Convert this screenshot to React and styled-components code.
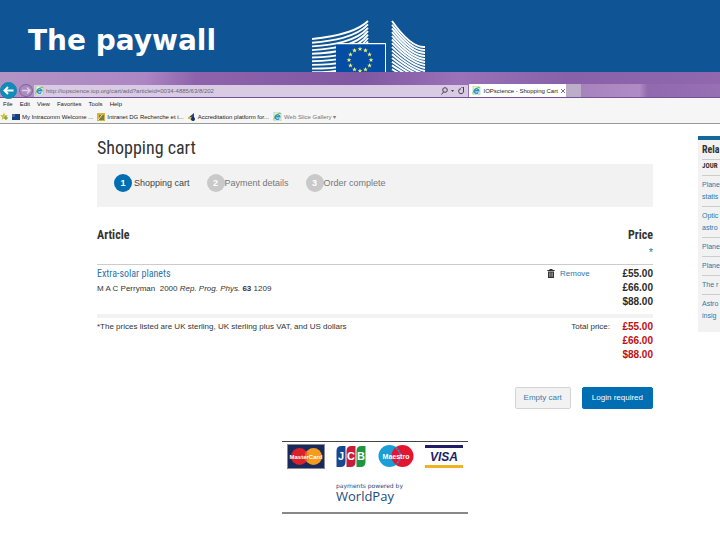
import React from 'react';
import styled, { createGlobalStyle } from 'styled-components';

const GlobalStyle = createGlobalStyle`
  * { box-sizing: border-box; }
  body {
    margin: 0;
    background: #fff;
    color: #333;
    font: 9px/14px "Liberation Sans", Arial, sans-serif;
    overflow-x: hidden;
  }
  h1, h2, h3, p, ul, ol { margin: 0; padding: 0; }
  ul, ol { list-style: none; }
  a { color: #2a78ac; text-decoration: none; }
  button, input { font: inherit; }
  svg { display: block; flex: none; }
`;

const narrow = '"Roboto Condensed", "Open Sans Condensed", Roboto, sans-serif';

const Banner = styled.header`
  display: grid;
  grid-template-columns: 1fr 114px 1fr;
  height: 72px;
  padding-left: 18px;
  background: #0f5494;
`;

const BannerTitle = styled.h1`
  padding: 25px 0 0 10px;
  color: #fff;
  font: bold 28px/32px "DejaVu Sans", Verdana, sans-serif;
  white-space: nowrap;
`;

const Chrome = styled.div`
  padding-top: 12px;
  background: linear-gradient(100deg, #b294c4 0%, #ad86c3 20%, #8f63ac 27%, #8057a2 50%, #9b72b7 63%, #8861a9 78%, #9168ae 100%);
  font: 6px/12px "Liberation Sans", Arial, sans-serif;
`;

const AddressRow = styled.div`
  display: flex;
  align-items: center;
  height: 14px;
  border-bottom: 1px solid #765095;
`;

const NavButton = styled.button`
  display: flex;
  align-items: center;
  justify-content: center;
  width: ${p => (p.$back ? 17 : 14)}px;
  height: ${p => (p.$back ? 17 : 13)}px;
  margin-right: ${p => (p.$back ? 2 : 1)}px;
  padding: 0;
  flex: none;
  border: 1px solid ${p => (p.$back ? '#1a82ad' : '#81659b')};
  border-radius: 50%;
  background: ${p => (p.$back ? '#108cba' : '#aa8bc0')};
  color: ${p => (p.$back ? '#fff' : '#ddd0e8')};
`;

const AddressBar = styled.div`
  display: flex;
  align-items: center;
  flex: 433;
  min-width: 0;
  height: 12px;
  padding: 0 3px 0 1px;
  gap: 2px;
  background: #d9cbe4;
  color: #4a4056;
`;

const AddressInput = styled.input`
  flex: 1;
  min-width: 0;
  height: 12px;
  padding: 0;
  border: 0;
  outline: 0;
  background: none;
  color: #6d6576;
`;

const BarButton = styled.button`
  display: flex;
  padding: 0;
  border: 0;
  background: none;
  color: #463c52;
`;

const Tabs = styled.div`
  display: flex;
  flex: 252;
  min-width: 0;
  height: 13px;
  margin-left: 1px;
`;

const Tab = styled.div`
  display: flex;
  align-items: center;
  flex: none;
  gap: 2px;
  width: 97px;
  padding: 0 3px;
  background: #fff;
  color: #222;
  white-space: nowrap;
`;

const TabLabel = styled.span`
  flex: 1;
`;

const NewTab = styled.button`
  width: 15px;
  padding: 0;
  border: 0;
  background: #bcadc8;
`;

const FadedTabs = styled.div`
  flex: 1;
  background: linear-gradient(90deg, #a783bd 0%, #b08cc5 42%, #9169ae 48%, #9770b4 100%);
`;

const MenuBar = styled.nav`
  display: flex;
  gap: 7px;
  height: 12px;
  padding-left: 3px;
  background: #f6f6f6;
`;

const MenuButton = styled.button`
  padding: 0;
  border: 0;
  background: none;
  color: #222;
`;

const Favorites = styled.nav`
  display: flex;
  align-items: center;
  gap: 4px;
  height: 14px;
  border-bottom: 1px solid #999;
  background: #f6f6f6;
`;

const Favorite = styled.a`
  display: flex;
  align-items: center;
  gap: 2px;
  color: ${p => (p.$muted ? '#777' : '#222')};
  white-space: nowrap;
`;

const Page = styled.div`
  display: grid;
  grid-template-columns: minmax(0, 1fr) 22px;
  gap: 45px;
  align-items: start;
  padding: 12px 0 24px 97px;
`;

const PageTitle = styled.h2`
  font: 18px/24px ${narrow};
`;

const Steps = styled.ol`
  display: flex;
  gap: 17px;
  height: 43px;
  margin-top: 4px;
  padding: 10px 17px;
  background: #f2f2f2;
`;

const Step = styled.li`
  display: flex;
  align-items: center;
  gap: ${p => (p.$current ? 2 : 0)}px;
  height: 18px;
  color: ${p => (p.$current ? '#444' : '#777')};
`;

const StepNumber = styled.span`
  width: 18px;
  border-radius: 50%;
  background: ${p => (p.$current ? '#006eb2' : '#c9c9c9')};
  color: #fff;
  font-weight: bold;
  line-height: 18px;
  text-align: center;
`;

const CartTable = styled.table`
  width: 100%;
  margin-top: 20px;
  border-collapse: collapse;

  th, td {
    padding: 0;
    text-align: left;
    vertical-align: top;
  }
`;

const HeadCell = styled.th`
  height: 37px;
  border-bottom: 1px solid #ccc;
  font: bold 12px/16px ${narrow};

  && { text-align: ${p => (p.$right ? 'right' : 'left')}; }
`;

const Star = styled.a`
  display: block;
  font: 11px/18px "Liberation Sans", sans-serif;
`;

const Cell = styled.td`
  && { padding-top: 2px; }
`;

const SideCell = styled(Cell)`
  width: 64px;
`;

const TotalLabel = styled.th`
  font-size: 8px;
  font-weight: normal;

  && {
    padding: 2px 1px 0 0;
    text-align: right;
  }
`;

const ItemLink = styled.a`
  display: block;
  font: 10px/14px ${narrow};
`;

const Small = styled.p`
  font-size: 8px;
  line-height: ${p => (p.$citation ? 16 : 14)}px;
`;

const RemoveButton = styled.button`
  display: flex;
  align-items: center;
  gap: 5px;
  padding: 0;
  border: 0;
  background: none;
  color: #2a78ac;
  font-size: 8px;
`;

const Prices = styled.td`
  width: 42px;
  color: ${p => (p.$total ? '#c00d12' : '#2b2b2b')};
  font: bold 10px/14px "Liberation Sans", sans-serif;

  && {
    padding: 2px 0 5px;
    text-align: right;
  }
`;

const TotalRow = styled.tr`
  border-top: 4px solid #f2f2f2;
`;

const Actions = styled.div`
  display: flex;
  justify-content: flex-end;
  gap: 11px;
  margin-top: 20px;
`;

const ActionButton = styled.button`
  height: 22px;
  padding: 0 ${p => (p.$primary ? 9 : 8)}px;
  border: 1px solid ${p => (p.$primary ? '#006eb2' : '#d4d4d4')};
  border-radius: 2px;
  background: ${p => (p.$primary ? '#006eb2' : '#f2f2f2')};
  color: ${p => (p.$primary ? '#fff' : '#3c7cad')};
  font-size: 8px;
`;

const Payments = styled.section`
  width: 186px;
  margin: 32px auto 0;
  border-top: 1px solid #444;
  border-bottom: 2px solid #888;
  color: #234a7c;
`;

const Cards = styled.div`
  display: flex;
  justify-content: space-between;
  padding: 2px 5px 0;
`;

const PoweredBy = styled.p`
  padding: 13px 0 0 54px;
  font: 6px/8px "DejaVu Sans", sans-serif;
  white-space: nowrap;
`;

const WorldPay = styled.p`
  padding: 0 0 9px 54px;
  font: 13px/13px "Open Sans", sans-serif;
`;

const Related = styled.aside`
  min-width: 0;
  padding: 3px 0 7px 4px;
  border-top: 4px solid #14689a;
  background: #f2f2f2;
  font: 7px/12px "Liberation Sans", Arial, sans-serif;
  white-space: nowrap;
`;

const RelatedTitle = styled.h3`
  padding-bottom: 3px;
  font: bold 10px/13px ${narrow};
`;

const RelatedSub = styled.p`
  padding: 1px 0 3px;
  border-top: 1px solid #ccc;
  font: bold 7px/11px ${narrow};
`;

const RelatedItem = styled.li`
  padding: 3px 0;
  border-top: 1px solid #ccc;
`;

function Star5({ x, y, r = 2.5 }) {
  const points = Array.from({ length: 10 }, (_, i) => {
    const a = -Math.PI / 2 + (i * Math.PI) / 5;
    const d = i % 2 ? r * 0.42 : r;
    return `${x + d * Math.cos(a)},${y + d * Math.sin(a)}`;
  }).join(' ');
  return <polygon points={points} fill="#f5f06c" />;
}

const leftLines = Array.from({ length: 10 }, (_, i) => {
  const y = 39 + i * 3.7;
  const lift = Math.max(0, 6 - i * 0.8);
  return `M0 ${y} C20 ${y - lift / 3} 44 ${y - lift} 56 ${21 + i * 3.4}`;
});

const rightLines = Array.from({ length: 14 }, (_, i) => {
  const y = 21 + i * 3.7;
  return `M80 ${y} Q99 ${y + 27 - i * 1.2} 113 ${47 + i * 3}`;
});

function CommissionLogo() {
  return (
    <svg width="114" height="72" viewBox="0 0 114 72" role="img" aria-label="European Commission">
      <g fill="none" stroke="#fff" strokeWidth="1.9">
        {leftLines.map(d => <path key={d} d={d} />)}
        {rightLines.map(d => <path key={d} d={d} />)}
      </g>
      <path d="M24 72V43h50v29z" fill="#fff" />
      <path d="M24 72V44.200h49V72z" fill="#034ea2" />
      {Array.from({ length: 12 }, (_, i) => {
        const a = (i * Math.PI) / 6;
        return <Star5 key={i} x={48 + 11 * Math.sin(a)} y={60 - 11 * Math.cos(a)} />;
      })}
    </svg>
  );
}

function Arrow({ back }) {
  return (
    <svg width="11" height="9" viewBox="0 0 11 9" fill="none" stroke="currentColor" strokeWidth={back ? 2 : 1.3}>
      <path d={back ? 'M10.500 4.500H1.500M5 1L1.500 4.500 5 8' : 'M1 4.500h8M6 1.500l3 3-3 3'} />
    </svg>
  );
}

function IeIcon() {
  return (
    <svg width="9" height="9" viewBox="0 0 9 9">
      <path d="M1 0h5l2 2v7H1z" fill="#e9f4e7" stroke="#8ab88b" strokeWidth=".5" />
      <path d="M2.200 4.800h4.600a2.300 2.300 0 1 0-.5 1.700" fill="none" stroke="#2490c7" strokeWidth="1.400" />
      <path d="M.8 7.500C2 3 5 1 8.300 1.300" fill="none" stroke="#6cb33e" strokeWidth=".8" />
    </svg>
  );
}

function TrashIcon() {
  return (
    <svg width="8" height="9" viewBox="0 0 8 9">
      <path d="M1 2.500h6V9H1zM.3 1h7.400v1H.3zM2.500 0h3v1h-3z" fill="#333" />
      <path d="M2.600 3.500v4.300M4 3.500v4.300M5.400 3.500v4.300" stroke="#ccc" strokeWidth=".6" />
    </svg>
  );
}

const cardText = { fontFamily: 'Liberation Sans, sans-serif', fontWeight: 'bold', textAnchor: 'middle' };

function MasterCard() {
  return (
    <svg width="38" height="25" viewBox="0 0 38 25">
      <path d="M0 0h38v25H0z" fill="#8b8b91" />
      <path d="M1 1h36v23H1z" fill="#182a5b" />
      <circle cx="12.500" cy="12.500" r="8.500" fill="#d9202b" />
      <circle cx="26.500" cy="12.500" r="8.500" fill="#f49b20" />
      <path d="M19.500 7v11M17.500 9h4M17.500 11h4M17.500 14h4M17.500 16h4" stroke="#e7632a" strokeWidth=".8" />
      <text x="19" y="15" fill="#fff" fontSize="6" {...cardText}>MasterCard</text>
    </svg>
  );
}

function Jcb() {
  const bars = [['J', '#154a91'], ['C', '#c91b3b'], ['B', '#1f963e']];
  return (
    <svg width="30" height="25" viewBox="0 0 30 25">
      {bars.map(([letter, fill], i) => (
        <g key={letter}>
          <path d={`M${i * 10 + 0.5} 23V7q0-5 5-5h4v16q0 5-5 5z`} fill={fill} />
          <text x={i * 10 + 5} y="16" fill="#fff" fontSize="11" {...cardText}>{letter}</text>
        </g>
      ))}
    </svg>
  );
}

function Maestro() {
  return (
    <svg width="36" height="25" viewBox="0 0 36 25">
      <circle cx="11.500" cy="12" r="11" fill="#199ed5" />
      <circle cx="24.500" cy="12" r="11" fill="#e4162f" />
      <path d="M18 3.700a10.500 10.500 0 0 1 0 16.600" fill="none" stroke="#199ed5" strokeWidth="1.500" strokeDasharray="2 1" />
      <text x="18" y="14.500" fill="#fff" fontSize="7" {...cardText}>Maestro</text>
    </svg>
  );
}

function Visa() {
  return (
    <svg width="38" height="25" viewBox="0 0 38 25">
      <path d="M0 1h38v3H0z" fill="#211c66" />
      <path d="M0 21h38v3H0z" fill="#eeb323" />
      <text x="19" y="17" fill="#211c66" fontSize="12" fontStyle="italic" {...cardText}>VISA</text>
    </svg>
  );
}

function Browser() {
  return (
    <Chrome>
      <AddressRow>
        <NavButton $back aria-label="Back"><Arrow back /></NavButton>
        <NavButton aria-label="Forward"><Arrow /></NavButton>
        <AddressBar>
          <IeIcon />
          <AddressInput aria-label="Address" defaultValue="http://iopscience.iop.org/cart/add?articleid=0034-4885/63/8/202" />
          <BarButton aria-label="Search">
            <svg width="7" height="8" viewBox="0 0 7 8" fill="none" stroke="currentColor"><circle cx="4" cy="3" r="2.300" /><path d="M2.500 5L.5 7.500" /></svg>
          </BarButton>
          <BarButton aria-label="Address options">
            <svg width="5" height="8" viewBox="0 0 5 8"><path d="M1 3h3L2.500 5z" fill="currentColor" /></svg>
          </BarButton>
          <BarButton aria-label="Refresh">
            <svg width="8" height="8" viewBox="0 0 8 8" fill="none" stroke="currentColor"><path d="M6.300 3A2.500 2.500 0 1 1 4 1.700M4 0h2.500v3" /></svg>
          </BarButton>
        </AddressBar>
        <Tabs>
          <Tab>
            <IeIcon />
            <TabLabel>IOPscience - Shopping Cart</TabLabel>
            <BarButton aria-label="Close tab">
              <svg width="6" height="6" viewBox="0 0 6 6" stroke="#777"><path d="M1 1l4 4M5 1L1 5" /></svg>
            </BarButton>
          </Tab>
          <NewTab aria-label="New tab" />
          <FadedTabs />
        </Tabs>
      </AddressRow>
      <MenuBar>
        {['File', 'Edit', 'View', 'Favorites', 'Tools', 'Help'].map(name => <MenuButton key={name}>{name}</MenuButton>)}
      </MenuBar>
      <Favorites>
        <svg width="8" height="9" viewBox="0 0 8 9"><path d="M4 .5l1.100 2.500 2.700.3-2 1.900.6 2.700L4 6.600 1.600 8l.6-2.800L.2 3.300 2.900 3z" fill="#d4c23c" /><path d="M4 6h4M6 4v4" stroke="#54a33b" /></svg>
        <Favorite href="#intracomm">
          <svg width="8" height="8" viewBox="0 0 8 8"><path d="M0 1h8v6H0z" fill="#173f7c" /><path d="M0 1h3v3H0z" fill="#456e9f" /></svg>
          My Intracomm Welcome ...
        </Favorite>
        <Favorite href="#intranet">
          <svg width="8" height="8" viewBox="0 0 8 8"><path d="M0 0h8v8H0z" fill="#d7b33d" /><path d="M2 2h5v5H2z" fill="#707d55" /><path d="M1 7l4-5" stroke="#f4e69b" /></svg>
          Intranet DG Recherche et i...
        </Favorite>
        <Favorite href="#accreditation">
          <svg width="8" height="8" viewBox="0 0 8 8"><path d="M6 0v8L0 5z" fill="#20458b" /><path d="M0 4h4v2H0z" fill="#d0ba3c" /><circle cx="5" cy="6" r="2" fill="#173062" /></svg>
          Accreditation platform for...
        </Favorite>
        <Favorite href="#slices" $muted><IeIcon />Web Slice Gallery ▾</Favorite>
      </Favorites>
    </Chrome>
  );
}

const related = [
  ['Plane', 'statis'],
  ['Optic', 'astro'],
  ['Plane'],
  ['Plane'],
  ['The r'],
  ['Astro', 'insig'],
];

export default function App() {
  return (
    <>
      <GlobalStyle />
      <Banner>
        <BannerTitle>The paywall</BannerTitle>
        <CommissionLogo />
      </Banner>
      <Browser />
      <Page>
        <main>
          <PageTitle>Shopping cart</PageTitle>
          <Steps>
            {['Shopping cart', 'Payment details', 'Order complete'].map((name, i) => (
              <Step key={name} $current={i === 0}>
                <StepNumber $current={i === 0}>{i + 1}</StepNumber>
                {name}
              </Step>
            ))}
          </Steps>
          <CartTable>
            <thead>
              <tr>
                <HeadCell colSpan={2}>Article</HeadCell>
                <HeadCell $right>Price<Star href="#prices">*</Star></HeadCell>
              </tr>
            </thead>
            <tbody>
              <tr>
                <Cell>
                  <ItemLink href="#article">Extra-solar planets</ItemLink>
                  <Small $citation>M A C Perryman &nbsp;2000 <i>Rep. Prog. Phys.</i> <b>63</b> 1209</Small>
                </Cell>
                <SideCell><RemoveButton><TrashIcon />Remove</RemoveButton></SideCell>
                <Prices>£55.00<br />£66.00<br />$88.00</Prices>
              </tr>
              <TotalRow>
                <Cell id="prices"><Small>*The prices listed are UK sterling, UK sterling plus VAT, and US dollars</Small></Cell>
                <TotalLabel scope="row">Total price:</TotalLabel>
                <Prices $total>£55.00<br />£66.00<br />$88.00</Prices>
              </TotalRow>
            </tbody>
          </CartTable>
          <Actions>
            <ActionButton>Empty cart</ActionButton>
            <ActionButton $primary>Login required</ActionButton>
          </Actions>
          <Payments>
            <Cards><MasterCard /><Jcb /><Maestro /><Visa /></Cards>
            <PoweredBy>payments powered by</PoweredBy>
            <WorldPay>WorldPay</WorldPay>
          </Payments>
        </main>
        <Related>
          <RelatedTitle>Rela</RelatedTitle>
          <RelatedSub>JOUR</RelatedSub>
          <ul>
            {related.map((lines, i) => (
              <RelatedItem key={i}>
                <a href="#related">{lines.map(line => <React.Fragment key={line}>{line}<br /></React.Fragment>)}</a>
              </RelatedItem>
            ))}
          </ul>
        </Related>
      </Page>
    </>
  );
}
